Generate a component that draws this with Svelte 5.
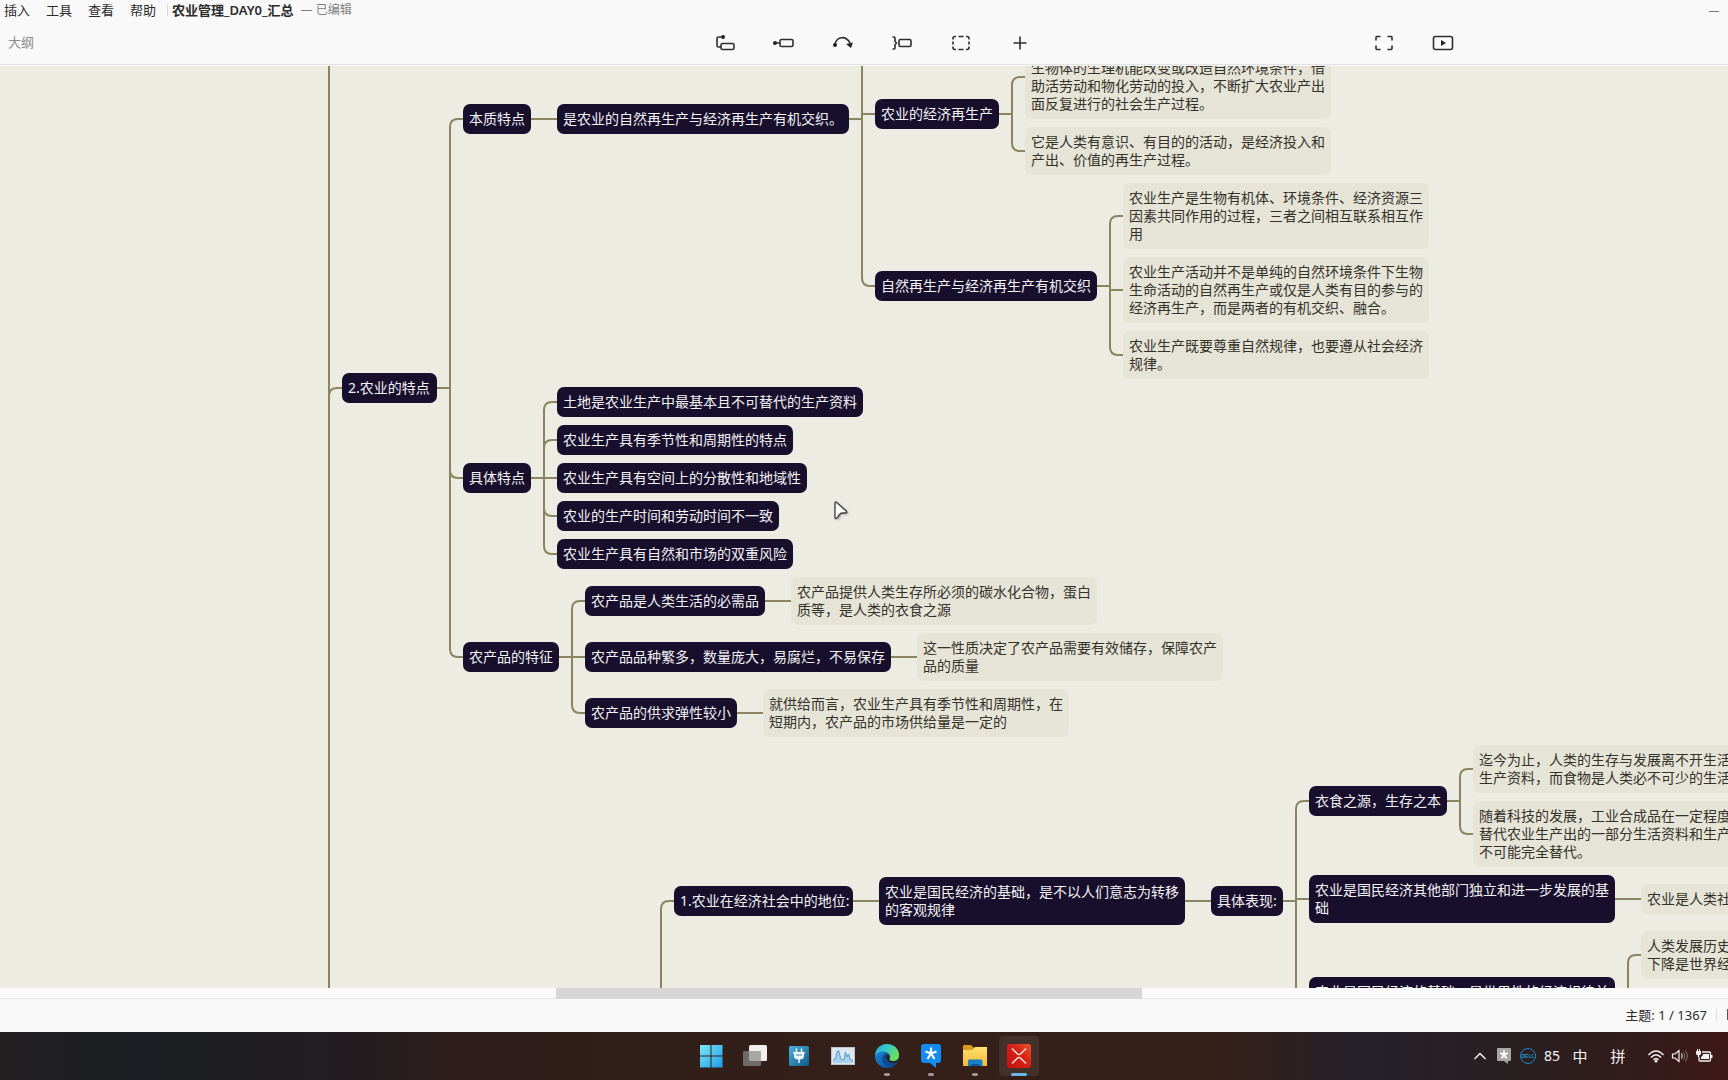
<script lang="ts">
  type Topic = { id: string; parent?: string; x: number; y: number; w: number; h: number; note?: boolean; lines: string[] };

  const topics: Topic[] = [
    { id: 'feat', x: 342, y: 373, w: 95, h: 30, lines: ['2.农业的特点'] },
    { id: 'ess', parent: 'feat', x: 463, y: 104, w: 68, h: 30, lines: ['本质特点'] },
    { id: 'weave', parent: 'ess', x: 557, y: 104, w: 292, h: 30, lines: ['是农业的自然再生产与经济再生产有机交织。'] },
    { id: 'eco', parent: 'weave', x: 875, y: 99, w: 124, h: 30, lines: ['农业的经济再生产'] },
    { id: 'eco1', parent: 'eco', x: 1025, y: 35, w: 306, h: 84, note: true, lines: ['生物体的生理机能改变或改造自然环境条件，借', '助活劳动和物化劳动的投入，不断扩大农业产出', '面反复进行的社会生产过程。'] },
    { id: 'eco2', parent: 'eco', x: 1025, y: 127, w: 306, h: 48, note: true, lines: ['它是人类有意识、有目的的活动，是经济投入和', '产出、价值的再生产过程。'] },
    { id: 'nat', parent: 'weave', x: 875, y: 271, w: 222, h: 30, lines: ['自然再生产与经济再生产有机交织'] },
    { id: 'nat1', parent: 'nat', x: 1123, y: 183, w: 306, h: 66, note: true, lines: ['农业生产是生物有机体、环境条件、经济资源三', '因素共同作用的过程，三者之间相互联系相互作', '用'] },
    { id: 'nat2', parent: 'nat', x: 1123, y: 257, w: 306, h: 66, note: true, lines: ['农业生产活动并不是单纯的自然环境条件下生物', '生命活动的自然再生产或仅是人类有目的参与的', '经济再生产，而是两者的有机交织、融合。'] },
    { id: 'nat3', parent: 'nat', x: 1123, y: 331, w: 306, h: 48, note: true, lines: ['农业生产既要尊重自然规律，也要遵从社会经济', '规律。'] },
    { id: 'spec', parent: 'feat', x: 463, y: 463, w: 68, h: 30, lines: ['具体特点'] },
    { id: 's1', parent: 'spec', x: 557, y: 387, w: 306, h: 30, lines: ['土地是农业生产中最基本且不可替代的生产资料'] },
    { id: 's2', parent: 'spec', x: 557, y: 425, w: 236, h: 30, lines: ['农业生产具有季节性和周期性的特点'] },
    { id: 's3', parent: 'spec', x: 557, y: 463, w: 250, h: 30, lines: ['农业生产具有空间上的分散性和地域性'] },
    { id: 's4', parent: 'spec', x: 557, y: 501, w: 222, h: 30, lines: ['农业的生产时间和劳动时间不一致'] },
    { id: 's5', parent: 'spec', x: 557, y: 539, w: 236, h: 30, lines: ['农业生产具有自然和市场的双重风险'] },
    { id: 'prod', parent: 'feat', x: 463, y: 642, w: 96, h: 30, lines: ['农产品的特征'] },
    { id: 'p1', parent: 'prod', x: 585, y: 586, w: 180, h: 30, lines: ['农产品是人类生活的必需品'] },
    { id: 'p1n', parent: 'p1', x: 791, y: 577, w: 306, h: 48, note: true, lines: ['农产品提供人类生存所必须的碳水化合物，蛋白', '质等，是人类的衣食之源'] },
    { id: 'p2', parent: 'prod', x: 585, y: 642, w: 306, h: 30, lines: ['农产品品种繁多，数量庞大，易腐烂，不易保存'] },
    { id: 'p2n', parent: 'p2', x: 917, y: 633, w: 306, h: 48, note: true, lines: ['这一性质决定了农产品需要有效储存，保障农产', '品的质量'] },
    { id: 'p3', parent: 'prod', x: 585, y: 698, w: 152, h: 30, lines: ['农产品的供求弹性较小'] },
    { id: 'p3n', parent: 'p3', x: 763, y: 689, w: 306, h: 48, note: true, lines: ['就供给而言，农业生产具有季节性和周期性，在', '短期内，农产品的市场供给量是一定的'] },
    { id: 'pos', x: 674, y: 886, w: 179, h: 30, lines: ['1.农业在经济社会中的地位:'] },
    { id: 'base', parent: 'pos', x: 879, y: 877, w: 306, h: 48, lines: ['农业是国民经济的基础，是不以人们意志为转移', '的客观规律'] },
    { id: 'show', parent: 'base', x: 1211, y: 886, w: 72, h: 30, lines: ['具体表现:'] },
    { id: 'food', parent: 'show', x: 1309, y: 786, w: 138, h: 30, lines: ['衣食之源，生存之本'] },
    { id: 'food1', parent: 'food', x: 1473, y: 745, w: 306, h: 48, note: true, lines: ['迄今为止，人类的生存与发展离不开生活', '生产资料，而食物是人类必不可少的生活'] },
    { id: 'food2', parent: 'food', x: 1473, y: 801, w: 306, h: 66, note: true, lines: ['随着科技的发展，工业合成品在一定程度', '替代农业生产出的一部分生活资料和生产', '不可能完全替代。'] },
    { id: 'dept', parent: 'show', x: 1309, y: 875, w: 306, h: 48, lines: ['农业是国民经济其他部门独立和进一步发展的基', '础'] },
    { id: 'dept1', parent: 'dept', x: 1641, y: 884, w: 306, h: 30, note: true, lines: ['农业是人类社'] },
    { id: 'law', parent: 'show', x: 1309, y: 977, w: 306, h: 48, lines: ['农业是国民经济的基础，是世界性的经济规律并'] },
    { id: 'law1', parent: 'law', x: 1641, y: 931, w: 306, h: 48, note: true, lines: ['人类发展历史', '下降是世界经'] }
  ];

  const ELBOW = 13;
  const R = 8;
  const mid = (t: Topic) => t.y + t.h / 2;
  const byId = new Map(topics.map((t) => [t.id, t]));

  function link(child: Topic): string {
    const parent = byId.get(child.parent!)!;
    const x0 = parent.x + parent.w;
    const y0 = mid(parent);
    const tx = child.x - ELBOW;
    const y1 = mid(child);
    const d = y1 - y0;
    if (Math.abs(d) < 12) return `M${x0} ${y0}H${tx}V${y1}H${child.x}`;
    const s = Math.sign(d);
    return `M${x0} ${y0}H${tx}V${y1 - s * R}Q${tx} ${y1} ${tx + R} ${y1}H${child.x}`;
  }

  const links = topics.filter((t) => t.parent).map(link);
  // Branches that continue beyond the visible part of the sheet.
  const offscreen = [
    'M329 0V1100', 'M329 396Q329 388 337 388H342',
    'M862 0V120', 'M661 1100V909Q661 901 669 901H674', 'M1296 901V1100'
  ];

  const menus = ['插入', '工具', '查看', '帮助'];
  const tools = [
    { name: '子主题', d: 'M7 5H4.500Q3 5 3 6.500V13.500Q3 15 4.500 15H7M8.500 11.500H18.500Q20 11.500 20 13V16Q20 17.500 18.500 17.500H8.500Q7 17.500 7 16V13Q7 11.500 8.500 11.500Z', dot: [9, 5, 2] },
    { name: '主题', d: 'M3 11H7M8.500 7.500H18.500Q20 7.500 20 9V13Q20 14.500 18.500 14.500H8.500Q7 14.500 7 13V9Q7 7.500 8.500 7.500Z', dot: [2, 11, 2] },
    { name: '联系', d: 'M3 12C5 4 14 3.500 18 11', dot: [3, 13, 2], arrow: 'M14 12L21 10.500L19 16Z' },
    { name: '概要', d: 'M1.500 5H3Q4 5 4 6V9.500L5.500 11L4 12.500V16Q4 17 3 17H1.500M9.500 7.500H18.500Q20 7.500 20 9V13Q20 14.500 18.500 14.500H9.500Q8 14.500 8 13V9Q8 7.500 9.500 7.500Z' },
    { name: '外框', d: 'M3 7.500V6.500Q3 4.500 5 4.500H6M8.500 4.500H13.500M16 4.500H17Q19 4.500 19 6.500V7.500M19 9.500V12.500M19 14.500V15.500Q19 17.500 17 17.500H16M13.500 17.500H8.500M6 17.500H5Q3 17.500 3 15.500V14.500M3 12.500V9.500' },
    { name: '插入更多', d: 'M11 4.500V17.500M4.500 11H17.500' }
  ];
</script>

<div class="app" lang="zh-CN">
  <header>
    <nav class="menubar">
      {#each menus as m}<button class="menu">{m}</button>{/each}
      <span class="rule"></span>
      <strong>农业管理_DAY0_汇总</strong>
      <span class="state">— 已编辑</span>
      <button class="min" aria-label="最小化"><svg width="10" height="10"><path d="M0 6.500H10" /></svg></button>
    </nav>
    <div class="toolbar">
      <div><button class="outline">大纲</button></div>
      <div class="group">
        {#each tools as t}
          <button class="tool" aria-label={t.name}>
            <svg width="22" height="22" viewBox="0 0 22 22">
              <path d={t.d} />
              {#if t.dot}<circle class="solid" cx={t.dot[0]} cy={t.dot[1]} r={t.dot[2]} />{/if}
              {#if t.arrow}<path class="solid" d={t.arrow} />{/if}
            </svg>
          </button>
        {/each}
      </div>
      <div class="group end">
        <button class="tool" aria-label="专注模式">
          <svg width="22" height="22" viewBox="0 0 22 22"><path d="M3 8.500V5.500Q3 4.500 4 4.500H7.500M14.500 4.500H18Q19 4.500 19 5.500V8.500M19 13.500V16.500Q19 17.500 18 17.500H14.500M7.500 17.500H4Q3 17.500 3 16.500V13.500" /></svg>
        </button>
        <button class="tool" aria-label="演说">
          <svg width="22" height="22" viewBox="0 0 22 22"><rect x="1.500" y="4.500" width="19" height="13" rx="2" /><path class="solid" d="M9 8L14 11L9 14Z" /></svg>
        </button>
      </div>
    </div>
  </header>

  <main>
    <div class="sheet">
      <svg class="links" width="2000" height="1100">
        {#each [...links, ...offscreen] as d}<path {d} />{/each}
      </svg>
      {#each topics as t (t.id)}
        <div class="topic" class:note={t.note} style="left:{t.x}px;top:{t.y}px;width:{t.w}px;height:{t.h}px" class:tail={t.id === 'eco1'}>
          {#each t.lines as l}<span>{l}</span>{/each}
        </div>
      {/each}
      <svg class="cursor" width="18" height="24" viewBox="0 0 18 24"><path d="M2 3Q2 1.500 3.500 2.300L13.500 11.300Q14.500 12.500 13 13H9.500Q8 13 7 14L4 18Q2 19.500 2 17.500Z" /></svg>
    </div>
  </main>
  <div class="scroll"><div class="thumb"></div></div>

  <footer>
    <span>主题: 1 / 1367</span>
    <span class="rule"></span>
    <span class="cut"></span>
  </footer>

  <div class="taskbar">
    <div></div>
    <div class="apps">
      <button aria-label="开始">
        <svg width="24" height="24" viewBox="0 0 24 24">
          <defs><linearGradient id="win" x1="0" y1="0" x2="1" y2="1"><stop offset="0" stop-color="#7be8fb" /><stop offset="1" stop-color="#1e9be8" /></linearGradient></defs>
          <path fill="url(#win)" d="M1 1H11.500V11.500H1ZM12.500 1H23.500V11.500H12.500ZM1 12.500H11.500V23.500H1ZM12.500 12.500H23.500V23.500H12.500Z" />
        </svg>
      </button>
      <button aria-label="任务视图">
        <svg width="24" height="24" viewBox="0 0 24 24"><rect x="6" y="1" width="18" height="16" rx="1.500" fill="#f1efee" /><rect x="0" y="7" width="18" height="15" rx="1.500" fill="#6e6b6a" /><path d="M6 7H18V17H6Z" fill="#aaa8a7" /></svg>
      </button>
      <button aria-label="电源管理">
        <svg width="24" height="24" viewBox="0 0 24 24">
          <defs><linearGradient id="plug" x1="0" y1="0" x2="1" y2="1"><stop offset="0" stop-color="#4cb0df" /><stop offset="1" stop-color="#0f5c84" /></linearGradient></defs>
          <rect x="2" y="2" width="20" height="20" rx="1.500" fill="url(#plug)" />
          <path d="M9.500 4.500V8M14.500 4.500V8M12 15V19" stroke="#eef8fc" stroke-width="1.500" /><path d="M6 8H18V9.500H17V12Q17 15.500 12 15.500T7 12V9.500H6Z" fill="#eef8fc" /><path d="M9 11H15" stroke="#2f8db9" />
        </svg>
      </button>
      <button aria-label="资源监视器">
        <svg width="24" height="24" viewBox="0 0 24 24"><rect x="0.500" y="3.500" width="23" height="17" fill="#dce6ee" stroke="#b9c4cc" /><path d="M2 16L4.500 15L6 8L7.500 6.500L9.500 14L11 16L13 15.500L14.500 8L16 13L17.500 10L19 15L22 17V19H2Z" fill="#a9d2ea" /><path d="M2 16L4.500 15L6 8L7.500 6.500L9.500 14L11 16L13 15.500L14.500 8L16 13L17.500 10L19 15L22 17" fill="none" stroke="#4f9ccb" /></svg>
      </button>
      <button class="running" aria-label="Microsoft Edge">
        <svg width="24" height="24" viewBox="0 0 24 24">
          <defs>
            <linearGradient id="e1" x1="0" y1="0" x2="1" y2="0.500"><stop offset="0" stop-color="#2aa8e0" /><stop offset="0.500" stop-color="#35c9c6" /><stop offset="1" stop-color="#6ae25a" /></linearGradient>
            <linearGradient id="e2" x1="0" y1="0" x2="0.500" y2="1"><stop offset="0" stop-color="#1f96dd" /><stop offset="1" stop-color="#0f56a8" /></linearGradient>
          </defs>
          <circle cx="12" cy="12" r="12" fill="url(#e2)" />
          <path d="M0.200 10C1.500 3.500 6.500 0 12 0C19 0 24 5 24 11C24 15 21 17 18 17C15.500 17 13.800 16 14.500 14.800C16.500 11.500 13.500 7.500 8.500 7.500C4.500 7.500 1 9 0.200 12Z" fill="url(#e1)" />
          <path d="M8.500 11C5 16 9 22.500 16 22.800C19 22 21.500 20 22.500 18C17 20.500 10.500 18 11 13C11.200 11.500 12 10.500 13 10C11.500 9 9.500 9.500 8.500 11Z" fill="#0c4a90" />
          <path d="M11 13C11 11.500 12 10.300 13.200 10.200C15 11.500 15 13.500 14.300 15C14 16.500 16 17.200 18 17.200C20 17.200 22 16.500 23 15L22.500 18C17 20.500 11 17.500 11 13Z" fill="#311e1b" />
        </svg>
      </button>
      <button class="running" aria-label="星标助手">
        <svg width="24" height="24" viewBox="0 0 24 24"><path d="M5 0H19Q22 0 22 3V16Q22 19 19 19H17V24L11 19H5Q2 19 2 16V3Q2 0 5 0Z" fill="#128cf0" /><path d="M12 9.500V3.500M12 9.500L6.500 7.500M12 9.500L17.500 7.500M12 9.500L8.500 15M12 9.500L15.500 15" stroke="#fff" stroke-width="2.200" /></svg>
      </button>
      <button class="running" aria-label="文件资源管理器">
        <svg width="24" height="24" viewBox="0 0 24 24">
          <defs><linearGradient id="fold" x1="0" y1="0" x2="0" y2="1"><stop offset="0" stop-color="#ffdf70" /><stop offset="1" stop-color="#f3b93a" /></linearGradient></defs>
          <path d="M0 2Q0 1 1 1H8L11 4V9H0Z" fill="#d99a1c" /><path d="M0 6H9L12 3H24V22H0Z" fill="url(#fold)" /><path d="M5 22V17Q5 15.500 6.500 15.500H18Q19.500 15.500 19.500 17V22Z" fill="#1681c4" /><path d="M8 22V20H16.500V22Z" fill="#0d5c9a" />
        </svg>
      </button>
      <button class="active" aria-label="XMind">
        <svg width="24" height="24" viewBox="0 0 24 24">
          <defs><linearGradient id="xm" x1="0" y1="1" x2="1" y2="0"><stop offset="0" stop-color="#c70f0f" /><stop offset="0.600" stop-color="#d82416" /><stop offset="1" stop-color="#f0562c" /></linearGradient></defs>
          <rect width="24" height="24" rx="3" fill="url(#xm)" /><path d="M5 4.500L10.500 10Q12 11.200 13.500 10L19 4.500M5 19.500L10.500 14Q12 12.800 13.500 14L19 19.500" fill="none" stroke="#fbe3dc" stroke-width="1.500" />
        </svg>
      </button>
    </div>
    <div class="tray">
      <button aria-label="显示隐藏的图标"><svg width="14" height="14" viewBox="0 0 14 14"><path d="M1.500 10L7 4.500L12.500 10" fill="none" stroke="#f2f0ef" stroke-width="1.500" /></svg></button>
      <button aria-label="星标助手通知"><svg width="16" height="18" viewBox="0 0 16 18"><path d="M2 1H14Q15 1 15 2V13Q15 14 14 14H12V17L8 14H2Q1 14 1 13V2Q1 1 2 1Z" fill="#aaa5a4" /><path d="M8 7.500V3M8 7.500L4 6M8 7.500L12 6M8 7.500L5.500 11.500M8 7.500L10.500 11.500" stroke="#fff" stroke-width="1.600" /></svg></button>
      <button class="dell" aria-label="Dell 电源"><span>DELL</span></button>
      <span class="cell">85</span>
      <button class="lang">中</button>
      <button class="lang ime">拼</button>
      <button aria-label="网络"><svg width="18" height="16" viewBox="0 0 18 16"><g fill="none" stroke="#f5f3f2" stroke-width="1.500"><path d="M1.500 7Q9 -1 16.500 7" /><path d="M4 9.500Q9 4 14 9.500" /><path d="M6.500 11.800Q9 9 11.500 11.800" /></g><circle cx="9" cy="13" r="1.500" fill="#f5f3f2" /></svg></button>
      <button aria-label="音量"><svg width="18" height="16" viewBox="0 0 18 16"><path d="M1.500 6V10H4L8 13.500V2.500L4 6Z" fill="none" stroke="#f5f3f2" stroke-width="1.200" /><path d="M10.500 5.500Q12 8 10.500 10.500" fill="none" stroke="#f5f3f2" /><path d="M12.500 4Q15 8 12.500 12M14.500 2.500Q18 8 14.500 13.500" fill="none" stroke="#85706e" /></svg></button>
      <button aria-label="电池"><svg width="18" height="16" viewBox="0 0 18 16"><path d="M7 4H14.500Q15.500 4 15.500 5V12Q15.500 13 14.500 13H5Q4 13 4 12V9" fill="none" stroke="#f5f3f2" stroke-width="1.300" /><path d="M8 6H14V11H6V9Q8 8 8 6ZM16 7H17.500V10H16ZM1 3H6V5.500Q6 7 4.200 7.200V9H2.800V7.200Q1 7 1 5.500ZM2 1H3V3H2ZM4 1H5V3H4Z" fill="#f5f3f2" /></svg></button>
    </div>
  </div>
</div>

<style>
  :global(body) { margin: 0; }
  .app {
    height: 100vh;
    display: flex;
    flex-direction: column;
    overflow: hidden;
    background: #f9f9f9;
    color: #2b2b2b;
    font: 13px/20px "Noto Sans", "Noto Sans CJK SC", sans-serif;
  }
  button {
    border: 0;
    padding: 0;
    background: none;
    color: inherit;
    font: inherit;
    display: inline-flex;
    align-items: center;
    justify-content: center;
  }
  header { flex: none; padding-bottom: 1px; }
  .menubar { display: flex; align-items: center; height: 20px; padding: 0 9px 2px 4px; }
  .menu { margin-right: 16px; }
  .rule { width: 1px; height: 12px; background: #dcdcdc; }
  .menubar .rule { margin: 0 4px 0 -5px; }
  .menubar strong { font-weight: 600; }
  .state { margin-left: 7px; color: #808080; font-size: 12px; }
  .min { margin-left: auto; }
  .min svg path { stroke: #777; }
  .toolbar {
    display: grid;
    grid-template-columns: 41fr auto 40fr;
    align-items: center;
    height: 42px;
    border-bottom: 1px solid #e2e2e2;
  }
  .outline { margin-left: 8px; padding-bottom: 2px; color: #8c8c8c; }
  .group { display: flex; }
  .end { justify-content: flex-end; padding-right: 256px; }
  .tool { width: 59px; height: 30px; }
  .tool svg { fill: none; stroke: #2f2f2f; stroke-width: 1.6; }
  .tool .solid { fill: #222; stroke: none; }

  main { flex: 1; min-height: 0; position: relative; overflow: hidden; background: #ecece2; }
  .sheet { position: absolute; left: 0; top: -66px; }
  .links { display: block; fill: none; stroke: #8a8560; stroke-width: 2; }
  .topic {
    position: absolute;
    box-sizing: border-box;
    padding: 6px;
    border-radius: 7px;
    background: #180f2d;
    color: #f3f2f5;
    font-size: 14px;
    line-height: 18px;
    white-space: nowrap;
    display: flex;
    flex-direction: column;
  }
  .topic span { height: 18px; }
  .note { background: #e6e3d7; color: #33322a; }
  .tail { justify-content: flex-end; }
  .cursor { position: absolute; left: 833px; top: 500px; fill: #fff; stroke: #3c3c3c; stroke-width: 1.3; filter: drop-shadow(1px 1px 1px rgba(0, 0, 0, 0.25)); }

  .scroll { flex: none; height: 10px; border-bottom: 1px solid #e4e4e4; background: #fbfbfb; }
  .thumb { width: 33.9%; height: 11px; margin-left: 32.2%; background: #d6d6d6; }

  footer {
    flex: none;
    display: flex;
    align-items: center;
    justify-content: flex-end;
    gap: 9px;
    height: 31px;
    padding-bottom: 2px;
  }
  .cut { width: 1px; height: 11px; margin-left: 1px; background: #555; }

  .taskbar {
    flex: none;
    height: 48px;
    display: grid;
    grid-template-columns: 1fr auto 1fr;
    background: linear-gradient(90deg, #221f20 0%, #1c1f23 8%, #231d20 21%, #2e1c1b 27%, #331f19 40%, #362019 70%, #25212a 79%, #291f21 88%, #3c1917 100%);
    color: #f5f3f2;
  }
  .apps { display: flex; align-items: center; padding-left: 2px; }
  .apps button { position: relative; width: 40px; height: 40px; margin: 0 2px; border-radius: 4px; }
  .apps .active { background: rgba(255, 255, 255, 0.08); }
  .running::after, .active::after {
    content: "";
    position: absolute;
    left: 17px;
    bottom: 0;
    width: 6px;
    height: 3px;
    border-radius: 2px;
    background: #a39a97;
  }
  .active::after { left: 12px; width: 16px; background: #67b9e4; }
  .tray { display: flex; align-items: center; justify-content: flex-end; padding-right: 12px; }
  .tray button, .cell { width: 24px; }
  .cell { margin-right: 4px; text-align: center; font-size: 14px; }
  .lang { font-size: 15px; }
  .tray .ime { margin: 0 14px; }
  .dell span {
    width: 14px;
    height: 14px;
    border: 1px solid #1c86c4;
    border-radius: 50%;
    color: #2196d8;
    font: bold 5px/14px "Liberation Sans", sans-serif;
    text-align: center;
  }
</style>
